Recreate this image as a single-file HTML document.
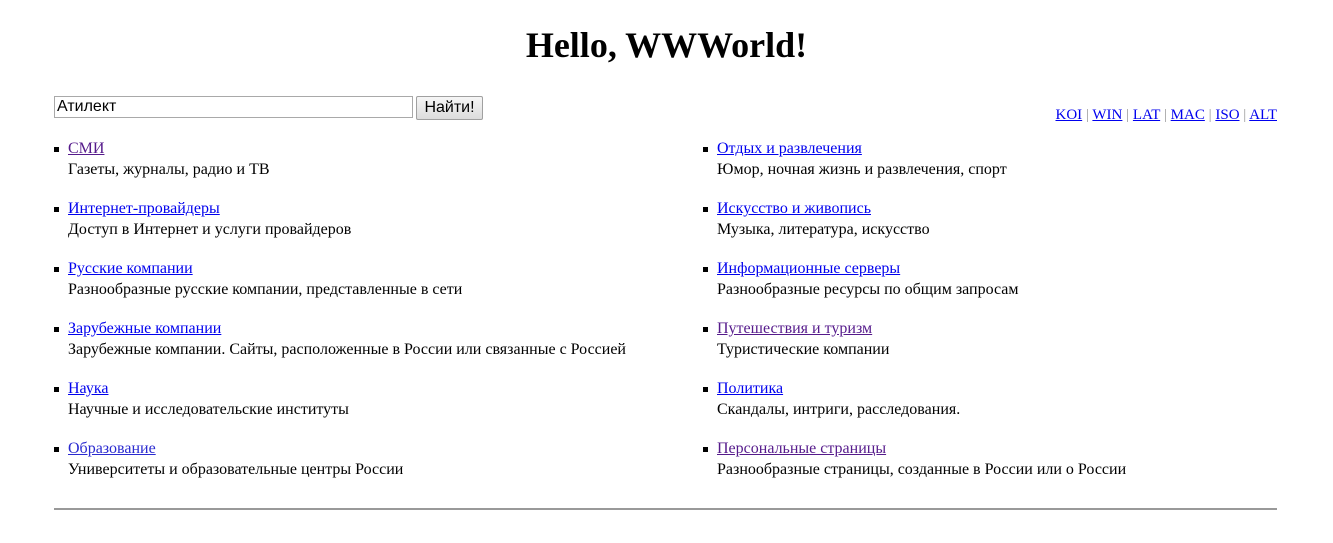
<!DOCTYPE html>
<html><head><meta charset="utf-8"><style>
body{margin:0;background:#fff;font-family:"Liberation Serif",serif;font-size:16px;color:#000;}
h1{position:absolute;top:23px;left:0;width:1333px;text-align:center;margin:0;font-size:36px;font-weight:bold;line-height:44px;}
a{color:#0000ee;}
a.v{color:#551a8b;}
#inp{position:absolute;left:54px;top:96px;width:353px;height:20px;border:1px solid #a9a9a9;font-family:"Liberation Sans",sans-serif;font-size:16px;padding:0 2px;line-height:20px;box-sizing:content-box;}
#btn{position:absolute;left:416px;top:96px;width:65px;height:22px;border:1px solid #a0a0a0;border-radius:2px;background:linear-gradient(#f6f6f6,#dcdcdc);font-family:"Liberation Sans",sans-serif;font-size:16px;text-align:center;line-height:21px;}
#enc{position:absolute;right:56px;top:107px;font-size:15px;color:#999;}
.it{position:absolute;line-height:21px;}
.it:before{content:"";position:absolute;left:-14px;top:9px;width:5px;height:5px;background:#000;}
hr{position:absolute;left:54px;top:508px;width:1223px;margin:0;border:0;border-top:2px solid #999;}
</style></head><body>
<h1>Hello, WWWorld!</h1>
<div id="inp">Атилект</div>
<div id="btn">Найти!</div>
<div id="enc"><a href="#">KOI</a> | <a href="#">WIN</a> | <a href="#">LAT</a> | <a href="#">MAC</a> | <a href="#">ISO</a> | <a href="#">ALT</a></div>

<div class="it" style="left:68px;top:138px"><a class="v" href="#">СМИ</a><br>Газеты, журналы, радио и ТВ</div>
<div class="it" style="left:68px;top:198px"><a href="#">Интернет-провайдеры</a><br>Доступ в Интернет и услуги провайдеров</div>
<div class="it" style="left:68px;top:258px"><a href="#">Русские компании</a><br>Разнообразные русские компании, представленные в сети</div>
<div class="it" style="left:68px;top:318px"><a href="#">Зарубежные компании</a><br>Зарубежные компании. Сайты, расположенные в России или связанные с Россией</div>
<div class="it" style="left:68px;top:378px"><a href="#">Наука</a><br>Научные и исследовательские институты</div>
<div class="it" style="left:68px;top:438px"><a href="#" style="color:#2a2ad0">Образование</a><br>Университеты и образовательные центры России</div>

<div class="it" style="left:717px;top:138px"><a href="#">Отдых и развлечения</a><br>Юмор, ночная жизнь и развлечения, спорт</div>
<div class="it" style="left:717px;top:198px"><a href="#">Искусство и живопись</a><br>Музыка, литература, искусство</div>
<div class="it" style="left:717px;top:258px"><a href="#">Информационные серверы</a><br>Разнообразные ресурсы по общим запросам</div>
<div class="it" style="left:717px;top:318px"><a class="v" href="#">Путешествия и туризм</a><br>Туристические компании</div>
<div class="it" style="left:717px;top:378px"><a href="#">Политика</a><br>Скандалы, интриги, расследования.</div>
<div class="it" style="left:717px;top:438px"><a class="v" href="#">Персональные страницы</a><br>Разнообразные страницы, созданные в России или о России</div>
<hr>
</body></html>
